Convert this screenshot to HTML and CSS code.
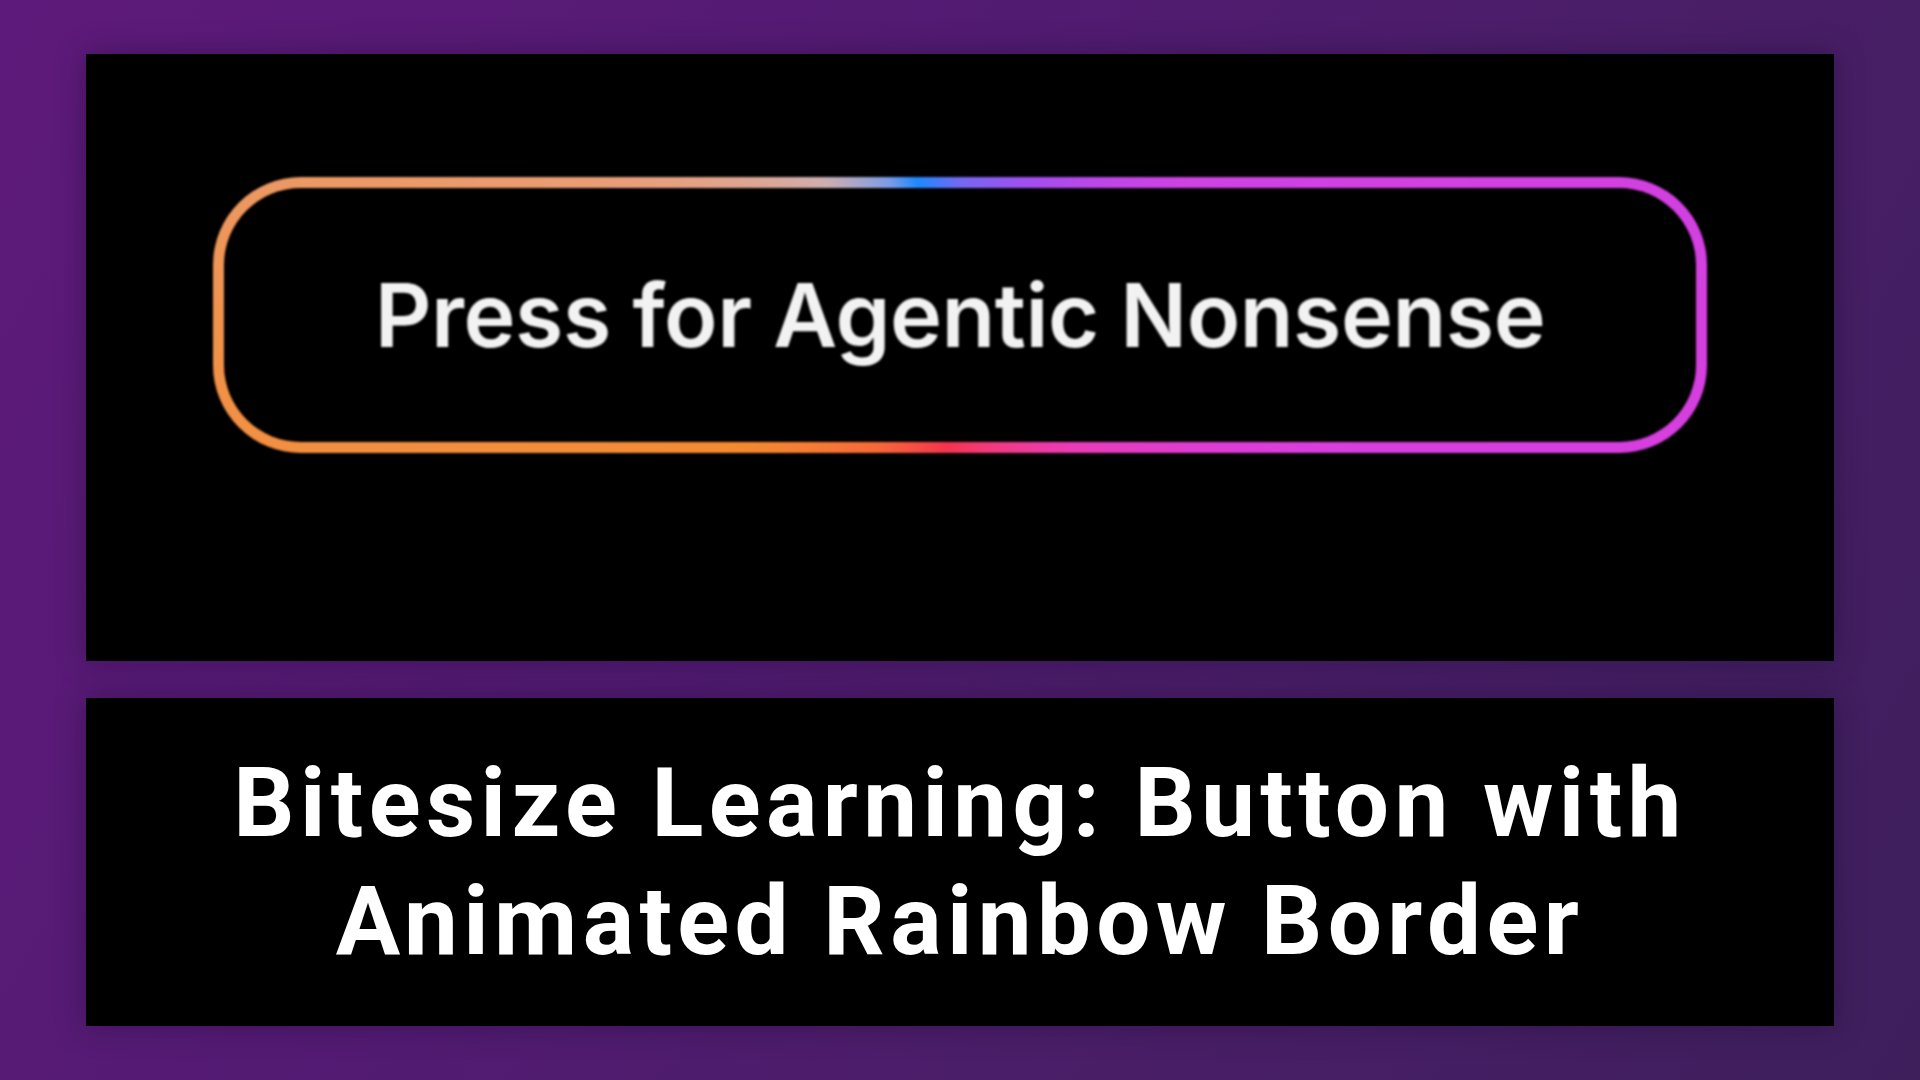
FILE: index.html
```html
<!DOCTYPE html>
<html lang="en">
<head>
<meta charset="utf-8">
<title>Bitesize Learning: Button with Animated Rainbow Border</title>
<link rel="stylesheet" href="styles.css">
</head>
<body>
  <main class="page">
    <section class="demo">
      <div class="rainbow-btn">
        <button class="rainbow-inner" type="button">Press for Agentic Nonsense</button>
      </div>
    </section>
    <section class="caption">
      <h1 class="caption-title">Bitesize Learning: Button with<br>Animated Rainbow Border</h1>
    </section>
  </main>
</body>
</html>
```
FILE: styles.css
```css
* { box-sizing: border-box; }
html, body { margin: 0; padding: 0; height: 100%; }
body {
  width: 1920px;
  height: 1080px;
  overflow: hidden;
  background: linear-gradient(120deg, #5e1a7a 0%, #521b72 40%, #4a1e68 65%, #3e1f5c 100%);
}
.page {
  height: 100%;
  padding: 54px 86px;
  display: flex;
  flex-direction: column;
  gap: 37px;
}
.demo {
  height: 607px;
  background: #000;
  box-shadow: 0 0 28px rgba(20, 0, 40, 0.35);
  display: flex;
  justify-content: center;
  align-items: flex-start;
  padding-top: 123px;
}
.rainbow-btn {
  width: 1494px;
  height: 276px;
  padding: 11px;
  border-radius: 88px;
  background: conic-gradient(from 0deg at 50% 50%,
    #7468f4 0deg,
    #a24ef0 28deg,
    #cf42e4 60deg,
    #d93ede 110deg,
    #ea3cb4 140deg,
    #f23a78 170deg,
    #f4344e 186deg,
    #f6683a 212deg,
    #f58a30 240deg,
    #f1924a 268deg,
    #e99e7a 292deg,
    #d0aeb0 314deg,
    #7a9ce8 332deg,
    #1e88ff 342deg,
    #7468f4 360deg);
  filter: blur(1.2px);
}
.rainbow-inner {
  width: 100%;
  height: 100%;
  border: 0;
  border-radius: 77px;
  background: #000;
  color: #f2f2f2;
  font-family: Inter, "Noto Sans", sans-serif;
  font-weight: 600;
  font-size: 88px;
  letter-spacing: -0.5px;
  cursor: pointer;
  display: flex;
  align-items: center;
  justify-content: center;
  padding: 0;
}
.caption {
  height: 328px;
  background: #000;
  box-shadow: 0 0 28px rgba(20, 0, 40, 0.35);
  display: flex;
  align-items: center;
  justify-content: center;
}
.caption-title {
  margin: 0;
  color: #fff;
  text-align: center;
  font-family: Roboto, "Liberation Sans", sans-serif;
  font-weight: 700;
  font-size: 96px;
  line-height: 118px;
  letter-spacing: 5.4px;
}
```
